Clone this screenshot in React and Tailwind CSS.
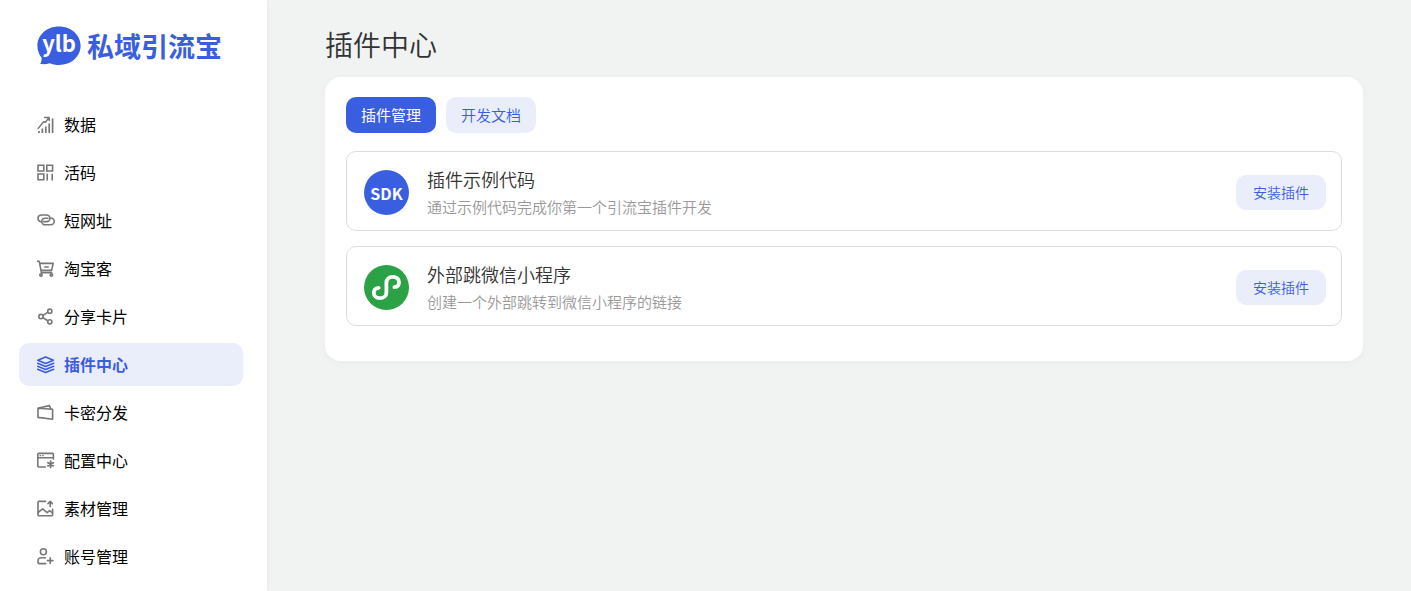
import clsx from 'clsx'

// ── Sidebar icons, all on an 18×18 grid ─────────────────────────────────────
const Glyph = ({ children }) => (
  <svg
    viewBox="0 0 18 18"
    className="w-[18px] h-[18px] shrink-0"
    fill="none"
    stroke="currentColor"
    strokeWidth="1.6"
    strokeLinecap="round"
    strokeLinejoin="round"
    aria-hidden="true"
  >
    {children}
  </svg>
)

const ChartIcon = () => (
  <Glyph>
    <path d="M1.2 12.4L6.6 5.8L8.4 6.2L12 1.6M7.6 1.4H12.2V4.6" strokeWidth="1.5" />
    <path d="M2 15V17M5.4 12.4V17M8.8 10.4V17M12.2 7.4V17M15.6 2.6V17" strokeWidth="1.7" strokeLinecap="butt" />
  </Glyph>
)

const CodeIcon = () => (
  <Glyph>
    <path d="M1 1.2H6.8V7H1ZM9.8 1.2H15.6V7H9.8ZM1 10H6.8V15.8H1Z" strokeLinejoin="miter" />
    <path d="M10.2 9.8V16.4M15.2 9.8V16.4" strokeLinecap="butt" />
  </Glyph>
)

const LinkIcon = () => (
  <Glyph>
    <path d="M3.8 9.7A3.5 3.4 0 0 1 4 3H9.6A3.4 3.3 0 0 1 9.6 9.6H6.6" />
    <path d="M13.8 6A3.5 3.4 0 0 1 13.6 12.8H8.2A3.4 3.3 0 0 1 8.2 6.2H11" />
  </Glyph>
)

const CartIcon = () => (
  <Glyph>
    <path d="M.4 1.2H2.2L4.4 12.6H14.8M2.8 3.4H16.2L14.6 10.4H4.2M7.8 7H11.2" />
    <circle cx="4" cy="14.9" r="1.2" />
    <circle cx="14.4" cy="14.9" r="1.2" />
  </Glyph>
)

const ShareIcon = () => (
  <Glyph>
    <circle cx="4" cy="8.6" r="2.2" />
    <circle cx="12.8" cy="3.2" r="2.1" />
    <circle cx="12.8" cy="13.8" r="2.1" />
    <path d="M6 7.4L10.8 4.4M6 9.8L10.8 12.7" />
  </Glyph>
)

const LayersIcon = () => (
  <Glyph>
    <path d="M8.6 .9L16.4 4.2L8.6 7.5L.8 4.2Z" />
    <path d="M.6 7.3L8.6 10.6L16.6 7.3M.6 10.3L8.6 13.6L16.6 10.3M.6 13.3L8.6 16.6L16.6 13.3" />
  </Glyph>
)

const WalletIcon = () => (
  <Glyph>
    <path d="M1 4.2L15.6 5.2V15.2L1 13.4Z" />
    <path d="M1.6 4L12.4 1.6L13.8 4.8" />
  </Glyph>
)

const ConfigIcon = () => (
  <Glyph>
    <path d="M8.4 15H1.8Q.8 15 .8 14V2.4Q.8 1.4 1.8 1.4H15.4Q16.4 1.4 16.4 2.4V7M.8 5.8H16.4" />
    <path d="M3 3.6H3.8M5.6 3.6H6.4" strokeWidth="1.1" />
    <path d="M13.6 9.2V15.4M10.9 10.8L16.3 13.9M16.3 10.8L10.9 13.9" strokeWidth="1.8" />
  </Glyph>
)

const ImageIcon = () => (
  <Glyph>
    <path d="M8.6 1.4H1.8Q1 1.4 1 2.2V15Q1 15.8 1.8 15.8H14.8Q15.6 15.8 15.6 15V9.2" />
    <path d="M1.2 12.4L5.6 8.8L10.2 12.6L12.6 10.6L15.4 12.8M13.2 6.6V1.6M11 3.6L13.2 1.4L15.4 3.6" />
  </Glyph>
)

const UserIcon = () => (
  <Glyph>
    <circle cx="6.4" cy="3.8" r="3" />
    <path d="M8.4 9.8H4.6Q1 9.8 1 12.8V14.4Q1 15.6 2.2 15.6H8.8M13.2 9.8V15.4M10.4 12.6H16" />
  </Glyph>
)

const MENU = [
  { label: '数据', icon: ChartIcon },
  { label: '活码', icon: CodeIcon },
  { label: '短网址', icon: LinkIcon },
  { label: '淘宝客', icon: CartIcon },
  { label: '分享卡片', icon: ShareIcon },
  { label: '插件中心', icon: LayersIcon, active: true },
  { label: '卡密分发', icon: WalletIcon },
  { label: '配置中心', icon: ConfigIcon },
  { label: '素材管理', icon: ImageIcon },
  { label: '账号管理', icon: UserIcon },
]

// ── Plugin logos ────────────────────────────────────────────────────────────
const SdkLogo = () => (
  <span className="w-[45px] h-[45px] shrink-0 rounded-full bg-[#3a5ee0] text-white flex items-center justify-center font-['Noto_Sans_CJK_SC',sans-serif] text-base font-bold">
    SDK
  </span>
)

const MiniProgramLogo = () => (
  <svg viewBox="0 0 45 45" className="w-[45px] h-[45px] shrink-0" aria-hidden="true">
    <circle cx="22.5" cy="22.5" r="22.5" fill="#2ba245" />
    <path
      d="M14.6 22.8C11.4 23.2 9.8 25.4 9.8 27.8C9.8 31 12.4 33.2 15.8 33.2C19.6 33.2 22.4 31 22.4 27.4V17.6C22.4 14 25.2 11.8 28.8 11.8C32.4 11.8 35 14 35 17.2C35 19.8 33.4 21.8 30.4 22.2"
      fill="none"
      stroke="#fff"
      strokeWidth="3.8"
      strokeLinecap="round"
    />
  </svg>
)

const PLUGINS = [
  { name: '插件示例代码', desc: '通过示例代码完成你第一个引流宝插件开发', logo: SdkLogo },
  { name: '外部跳微信小程序', desc: '创建一个外部跳转到微信小程序的链接', logo: MiniProgramLogo },
]

const Brand = () => (
  <a href="#" className="flex items-center gap-1.5 ml-[37px] text-[#3a5ee0]">
    <svg viewBox="0 0 44 40" className="w-11 h-10 shrink-0" role="img" aria-label="ylb">
      <path
        d="M22 .6C34.2 .6 43.6 9 43.6 19.8S34.2 39 22 39C18.6 39 15.4 38.3 12.8 37.2C9.6 38.3 6.4 38.3 3.2 38C4.4 36 4.8 33.8 4.6 31.8C2 28.6 .4 24.4 .4 19.8C.4 9 9.8 .6 22 .6Z"
        fill="currentColor"
      />
      <text x="22" y="26" textAnchor="middle" fill="#fff" className="font-['Noto_Sans_CJK_SC',sans-serif] text-[22px] font-bold">
        ylb
      </text>
    </svg>
    <span className="text-[27px] leading-10 font-bold whitespace-nowrap">私域引流宝</span>
  </a>
)

const Sidebar = () => (
  <aside className="w-[267px] shrink-0 bg-white pt-[26px] shadow-[0_0_4px_rgba(0,0,0,0.06)]">
    <Brand />
    <nav className="mt-[37px] pl-[19px] pr-6 flex flex-col gap-[5px]">
      {MENU.map(({ label, icon: Icon, active }) => (
        <a
          key={label}
          href="#"
          aria-current={active ? 'page' : undefined}
          className={clsx(
            'flex items-center gap-[9px] h-[43px] pl-[18px] rounded-[10px] text-base',
            active ? 'bg-[#eaeefb] text-[#3a5ee0] font-bold' : 'text-black'
          )}
        >
          <span className={active ? 'text-[#3a5ee0]' : 'text-[#777]'}>
            <Icon />
          </span>
          <span className="pb-0.5">{label}</span>
        </a>
      ))}
    </nav>
  </aside>
)

const PluginRow = ({ name, desc, logo: Logo }) => (
  <li className="flex items-center h-20 pt-[3px] pl-[17px] pr-[15px] border border-[#ddd] rounded-[10px]">
    <Logo />
    <div className="ml-[18px] flex-1 min-w-0">
      <h2 className="text-lg leading-7 font-[350] text-[#333] truncate">{name}</h2>
      <p className="text-[15px] leading-7 font-[350] text-[#999] truncate">{desc}</p>
    </div>
    <button type="button" className="w-[90px] h-[35px] pb-0.5 shrink-0 rounded-[10px] bg-[#eaeefb] text-[#3a5ee0] text-sm font-[350]">
      安装插件
    </button>
  </li>
)

export default function App() {
  return (
    <div className="flex min-h-screen bg-[#f1f3f3] font-['Noto_Sans_CJK_SC',sans-serif]">
      <Sidebar />
      <main className="flex-1 min-w-0 pl-[58px] pr-12 pt-6">
        <h1 className="text-[28px] leading-10 font-[350] text-[#333]">插件中心</h1>
        <section className="mt-[13px] bg-white rounded-2xl px-[21px] pt-5 pb-[35px] shadow-[0_2px_8px_rgba(0,0,0,0.03)]">
          <div className="flex gap-2.5">
            <button type="button" className="w-[90px] h-9 rounded-[10px] bg-[#3a5ee0] text-white text-[15px]">
              插件管理
            </button>
            <button type="button" className="w-[90px] h-9 rounded-[10px] bg-[#eaeefb] text-[#3a5ee0] text-[15px] font-[350]">
              开发文档
            </button>
          </div>
          <ul className="mt-[18px] flex flex-col gap-[15px]">
            {PLUGINS.map((p) => (
              <PluginRow key={p.name} {...p} />
            ))}
          </ul>
        </section>
      </main>
    </div>
  )
}
